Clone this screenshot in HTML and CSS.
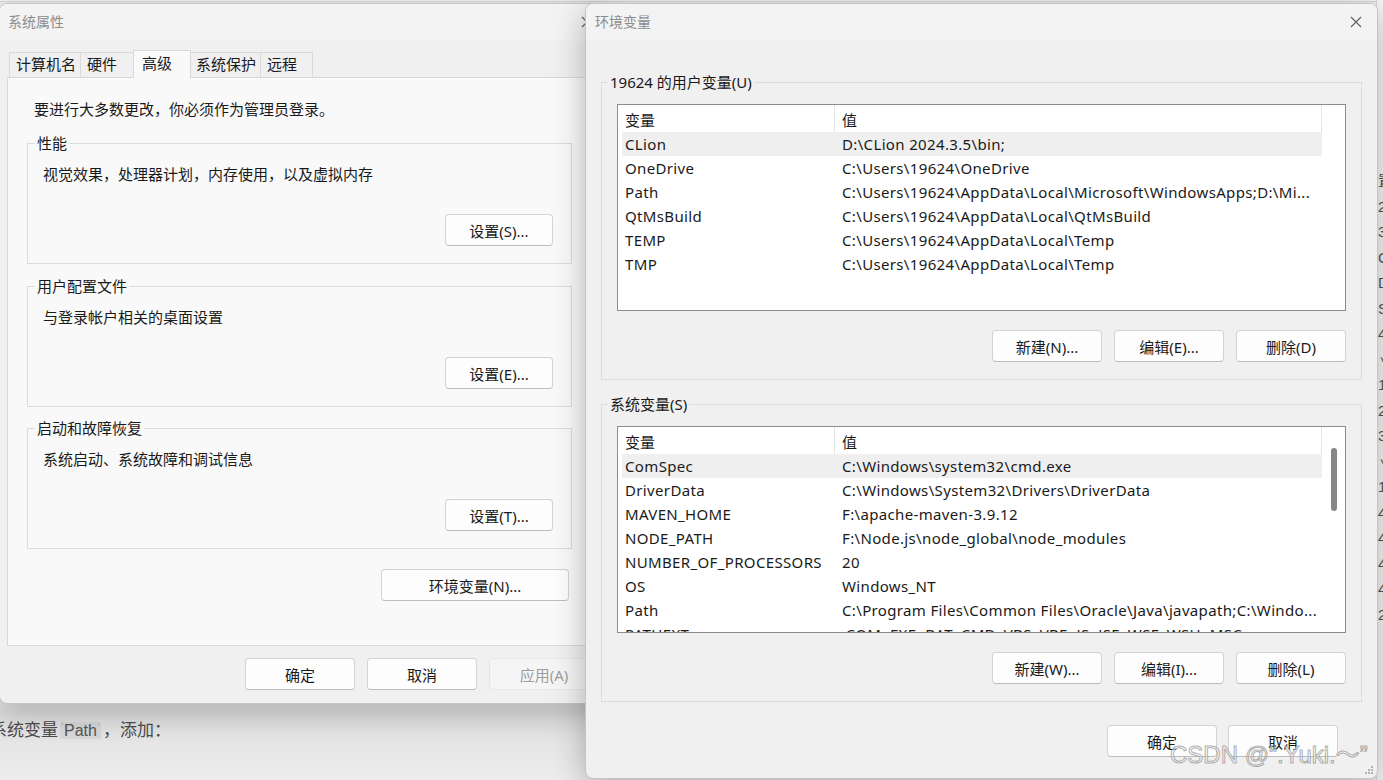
FILE: index.html
```html
<!DOCTYPE html>
<html lang="zh-CN">
<head>
    <meta charset="UTF-8">
    <meta name="viewport" content="width=device-width, initial-scale=1.0">
    <title>环境变量</title>
    <link rel="stylesheet" href="styles.css">
</head>
<body>
<div class="desktop">

    <!-- page behind the dialogs -->
    <div class="page-behind">
        <p class="page-line">系统变量<code class="inline-code"><span class="tick">`</span>Path<span class="tick">`</span></code>，添加：</p>
    </div>
    <div class="side-page">
        <span>置</span><span>2</span><span>3</span><span>C</span><span>D</span><span>S</span><span>4</span>
        <span>丷</span><span>1</span><span>2</span><span>3</span><span>丷</span><span>1</span>
        <span>4</span><span>4</span><span>4</span><span>4</span><span>2</span>
    </div>

    <!-- 系统属性 -->
    <div class="window sys-window">
        <div class="titlebar">
            <span class="title">系统属性</span>
            <span class="close-box">
                <svg width="12" height="12" viewBox="0 0 12 12"><path d="M1 1L11 11M11 1L1 11" stroke="#5c5c5c" stroke-width="1.1" fill="none"/></svg>
            </span>
        </div>
        <div class="tabs">
            <div class="tab tab-1">计算机名</div>
            <div class="tab tab-2">硬件</div>
            <div class="tab tab-3 tab-active">高级</div>
            <div class="tab tab-4">系统保护</div>
            <div class="tab tab-5">远程</div>
        </div>
        <div class="tab-page">
            <p class="note">要进行大多数更改，你必须作为管理员登录。</p>

            <fieldset class="group sys-group first-group">
                <legend>性能</legend>
                <p class="group-text">视觉效果，处理器计划，内存使用，以及虚拟内存</p>
                <div class="group-actions"><button class="btn">设置(S)...</button></div>
            </fieldset>

            <fieldset class="group sys-group second-group">
                <legend>用户配置文件</legend>
                <p class="group-text">与登录帐户相关的桌面设置</p>
                <div class="group-actions"><button class="btn">设置(E)...</button></div>
            </fieldset>

            <fieldset class="group sys-group third-group">
                <legend>启动和故障恢复</legend>
                <p class="group-text">系统启动、系统故障和调试信息</p>
                <div class="group-actions"><button class="btn">设置(T)...</button></div>
            </fieldset>

            <div class="env-row"><button class="btn btn-wide">环境变量(N)...</button></div>
        </div>
        <div class="dialog-buttons sys-buttons">
            <button class="btn">确定</button>
            <button class="btn">取消</button>
            <button class="btn btn-disabled">应用(A)</button>
        </div>
    </div>

    <!-- 环境变量 -->
    <div class="window env-window">
        <div class="titlebar">
            <span class="title">环境变量</span>
            <span class="close-box">
                <svg width="12" height="12" viewBox="0 0 12 12"><path d="M1 1L11 11M11 1L1 11" stroke="#5c5c5c" stroke-width="1.1" fill="none"/></svg>
            </span>
        </div>
        <div class="env-body">
            <fieldset class="group env-group">
                <legend>19624 的用户变量(U)</legend>
                <div class="list">
                    <div class="list-main">
                        <div class="list-head">
                            <div class="head-cell">变量</div>
                            <div class="head-cell">值</div>
                        </div>
                        <div class="list-rows">
                            <div class="row row-selected"><span>CLion</span><span>D:\CLion 2024.3.5\bin;</span></div>
                            <div class="row"><span>OneDrive</span><span>C:\Users\19624\OneDrive</span></div>
                            <div class="row"><span>Path</span><span>C:\Users\19624\AppData\Local\Microsoft\WindowsApps;D:\Mi...</span></div>
                            <div class="row"><span>QtMsBuild</span><span>C:\Users\19624\AppData\Local\QtMsBuild</span></div>
                            <div class="row"><span>TEMP</span><span>C:\Users\19624\AppData\Local\Temp</span></div>
                            <div class="row"><span>TMP</span><span>C:\Users\19624\AppData\Local\Temp</span></div>
                        </div>
                    </div>
                    <div class="scroll-col"></div>
                </div>
                <div class="group-actions env-actions">
                    <button class="btn">新建(N)...</button>
                    <button class="btn">编辑(E)...</button>
                    <button class="btn">删除(D)</button>
                </div>
            </fieldset>

            <fieldset class="group env-group system-group">
                <legend>系统变量(S)</legend>
                <div class="list">
                    <div class="list-main">
                        <div class="list-head">
                            <div class="head-cell">变量</div>
                            <div class="head-cell">值</div>
                        </div>
                        <div class="list-rows">
                            <div class="row row-selected"><span>ComSpec</span><span>C:\Windows\system32\cmd.exe</span></div>
                            <div class="row"><span>DriverData</span><span>C:\Windows\System32\Drivers\DriverData</span></div>
                            <div class="row"><span>MAVEN_HOME</span><span>F:\apache-maven-3.9.12</span></div>
                            <div class="row"><span>NODE_PATH</span><span>F:\Node.js\node_global\node_modules</span></div>
                            <div class="row"><span>NUMBER_OF_PROCESSORS</span><span>20</span></div>
                            <div class="row"><span>OS</span><span>Windows_NT</span></div>
                            <div class="row"><span>Path</span><span>C:\Program Files\Common Files\Oracle\Java\javapath;C:\Windo...</span></div>
                            <div class="row"><span>PATHEXT</span><span>.COM;.EXE;.BAT;.CMD;.VBS;.VBE;.JS;.JSE;.WSF;.WSH;.MSC</span></div>
                        </div>
                    </div>
                    <div class="scroll-col"><div class="scroll-thumb"></div></div>
                </div>
                <div class="group-actions env-actions">
                    <button class="btn">新建(W)...</button>
                    <button class="btn">编辑(I)...</button>
                    <button class="btn">删除(L)</button>
                </div>
            </fieldset>

            <div class="dialog-buttons env-buttons">
                <button class="btn">确定</button>
                <button class="btn">取消</button>
            </div>
        </div>
        <svg class="grip" width="9" height="9" viewBox="0 0 9 9">
            <rect x="6" y="0" width="2" height="2" fill="#b4b4b4"/>
            <rect x="3" y="3" width="2" height="2" fill="#b4b4b4"/>
            <rect x="6" y="3" width="2" height="2" fill="#b4b4b4"/>
            <rect x="0" y="6" width="2" height="2" fill="#b4b4b4"/>
            <rect x="3" y="6" width="2" height="2" fill="#b4b4b4"/>
            <rect x="6" y="6" width="2" height="2" fill="#b4b4b4"/>
        </svg>
    </div>

    <div class="watermark">CSDN @“.Yuki.～”</div>
</div>
</body>
</html>
```

FILE: styles.css
```css
* {
  box-sizing: border-box;
}

html, body {
  margin: 0;
  padding: 0;
}

body {
  width: 1383px;
  height: 780px;
  overflow: hidden;
  font-family: "Noto Sans", "Noto Sans CJK SC", sans-serif;
  font-size: 15px;
  color: #1a1a1a;
  background: #ececec;
}

.desktop {
  position: relative;
  width: 1383px;
  height: 780px;
  overflow: hidden;
  background: linear-gradient(#f4f4f4 0, #f4f4f4 1px, #d6d6d6 1px, #d6d6d6 2px, #eeeeee 2px, #e4e4e4 700px, #dcdcdc 712px, #e6e6e6 745px, #ededed 780px);
}

/* page behind */
.page-behind {
  padding-top: 715px;
}

.page-line {
  margin: 0 0 0 -10px;
  font-family: "Noto Sans CJK SC", sans-serif;
  font-size: 17px;
  line-height: 24px;
  color: #4a4a4a;
}

.inline-code {
  font-family: "Liberation Sans", sans-serif;
  font-size: 16px;
  color: #555;
  background: rgba(0, 0, 0, 0.05);
  padding: 0 1px;
  margin: 0 2px;
}

.tick {
  font-size: 9px;
  color: #aaa;
  vertical-align: 6px;
}

.side-page {
  position: absolute;
  left: 1376px;
  top: 0;
  width: 7px;
  height: 780px;
  padding-top: 168px;
  background: #f6f6f6;
  border-left: 1px solid #d8d8d8;
  overflow: hidden;
  display: flex;
  flex-direction: column;
  font-family: "Liberation Sans", "Noto Sans CJK SC", sans-serif;
  font-size: 15px;
  line-height: 25.5px;
  color: #555;
}

.side-page span {
  padding-left: 1px;
}

/* windows */
.window {
  position: absolute;
  top: 3px;
  border-radius: 8px;
  overflow: hidden;
  background: #f0f0f0;
  border: 1px solid #c4c4c4;
}

.sys-window {
  left: -1px;
  width: 610px;
  height: 701px;
  box-shadow: 0 8px 30px rgba(0, 0, 0, 0.22);
}

.env-window {
  left: 585px;
  width: 793px;
  height: 776px;
  box-shadow: 0 8px 32px rgba(0, 0, 0, 0.28);
}

.titlebar {
  height: 37px;
  display: flex;
  align-items: center;
  justify-content: space-between;
  background: #f3f3f3;
  padding-left: 8px;
  padding-bottom: 4px;
}

.env-window .titlebar {
  padding-left: 9px;
  padding-bottom: 3px;
}

.title {
  font-family: "Noto Sans CJK SC", sans-serif;
  font-size: 14px;
  color: #8c8c8c;
}

.close-box {
  width: 42px;
  display: flex;
  justify-content: center;
  padding-top: 2px;
}

/* tabs */
.tabs {
  display: flex;
  align-items: flex-end;
  height: 27px;
  margin: 9px 0 0 9px;
}

.tab {
  height: 25px;
  padding-left: 6px;
  line-height: 23px;
  border: 1px solid #d9d9d9;
  border-bottom: none;
  background: #f0f0f0;
  margin-right: -1px;
  white-space: nowrap;
}

.tab-1 { width: 72px; }
.tab-2 { width: 54px; }
.tab-3 { width: 58px; padding-left: 8px; }
.tab-4 { width: 71px; padding-left: 5px; }
.tab-5 { width: 53px; padding-left: 6px; }

.tab-active {
  position: relative;
  z-index: 1;
  height: 28px;
  margin-bottom: -1px;
  line-height: 24px;
  background: #f9f9f9;
}

.tab-page {
  margin-left: 7px;
  width: 595px;
  height: 569px;
  border: 1px solid #d9d9d9;
  background: #f9f9f9;
  padding: 21px 0 0 19px;
}

.note {
  margin: 0 0 0 7px;
  line-height: 20px;
}

/* group boxes */
.group {
  margin: 0;
  border: 1px solid #dcdcdc;
  min-width: 0;
}

.group legend {
  padding: 0 2px;
  line-height: 20px;
}

.sys-group {
  width: 545px;
  padding: 11px 18px 17px 15px;
}

.sys-group legend {
  margin-left: -8px;
}

.first-group { margin-top: 14px; }
.second-group { margin-top: 12px; }
.third-group { margin-top: 11px; }

.group-text {
  margin: 0;
  line-height: 20px;
}

.group-actions {
  display: flex;
  justify-content: flex-end;
  gap: 12px;
  margin-top: 30px;
}

.env-row {
  width: 545px;
  display: flex;
  justify-content: flex-end;
  padding-right: 3px;
  margin-top: 20px;
}

/* buttons */
.btn {
  width: 108px;
  height: 32px;
  padding: 0;
  font-family: "Noto Sans", "Noto Sans CJK SC", sans-serif;
  font-size: 15px;
  color: #1a1a1a;
  background: #fdfdfd;
  border: 1px solid #d3d3d3;
  border-bottom-color: #bcbcbc;
  border-radius: 4px;
}

.btn-wide {
  width: 188px;
}

.btn-disabled {
  color: #9d9d9d;
  background: #f5f5f5;
  border-color: #e6e6e6;
}

.dialog-buttons {
  display: flex;
  justify-content: flex-end;
}

.sys-buttons {
  margin-top: 12px;
  padding-right: 9px;
  gap: 12px;
}

.sys-buttons .btn {
  width: 110px;
}

/* env dialog */
.env-body {
  padding: 31px 15px 0 15px;
}

.env-group {
  padding: 12px 15px 17px 15px;
}

.env-group legend {
  margin-left: -9px;
}

.system-group {
  margin-top: 14px;
}

.list {
  display: flex;
  height: 207px;
  border: 1px solid #8c8c8c;
  background: #fff;
}

.list-main {
  width: 704px;
  overflow: hidden;
}

.list-head {
  display: grid;
  grid-template-columns: 217px 487px;
  height: 27px;
}

.head-cell {
  padding: 3px 0 0 7px;
  line-height: 24px;
  border-right: 1px solid #e5e5e5;
}

.list-rows {
  margin-left: 4px;
  width: 700px;
}

.row {
  display: grid;
  grid-template-columns: 213px 487px;
  height: 24px;
  line-height: 24px;
  white-space: nowrap;
  letter-spacing: 0.35px;
}

.row span {
  overflow: hidden;
}

.row span:first-child {
  padding-left: 3px;
}

.row span:last-child {
  padding-left: 7px;
}

.row-selected {
  background: #efefef;
}

.scroll-col {
  flex: 1;
  padding: 21px 0 0 9px;
}

.scroll-thumb {
  width: 6px;
  height: 63px;
  border-radius: 3px;
  background: #868686;
}

.env-actions {
  margin-top: 19px;
}

.env-actions .btn {
  width: 110px;
}

.env-buttons {
  margin-top: 23px;
  padding-right: 24px;
  gap: 11px;
}

.env-buttons .btn {
  width: 110px;
}

.grip {
  position: absolute;
  right: 3px;
  bottom: 3px;
}

.watermark {
  position: absolute;
  left: 1170px;
  top: 740px;
  font-family: "Liberation Sans", "Noto Sans CJK SC", sans-serif;
  font-size: 24px;
  line-height: 30px;
  white-space: nowrap;
  color: rgba(255, 255, 255, 0.55);
  -webkit-text-stroke: 1px rgba(140, 140, 140, 0.7);
}
```
